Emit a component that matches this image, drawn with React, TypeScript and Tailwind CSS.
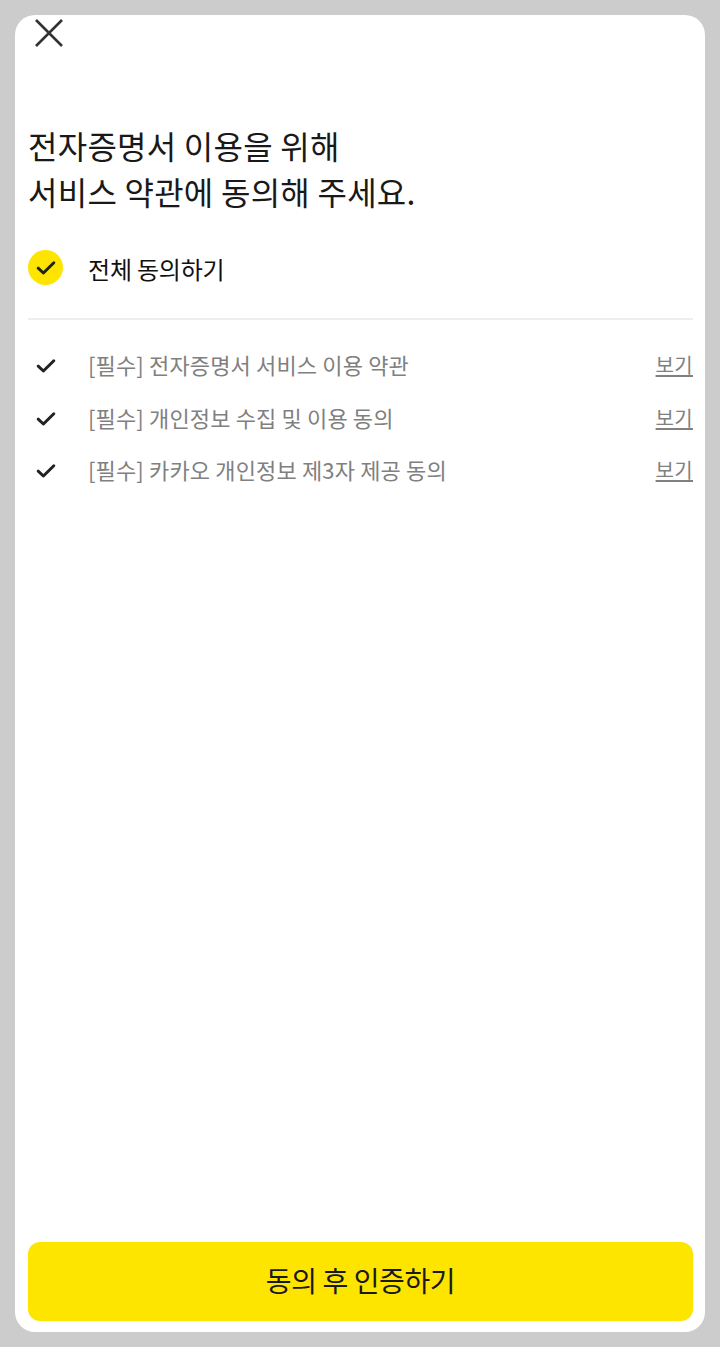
const fontStack = {
  fontFamily: '"Noto Sans CJK KR", "Noto Sans", sans-serif',
};

const terms = [
  "[필수] 전자증명서 서비스 이용 약관",
  "[필수] 개인정보 수집 및 이용 동의",
  "[필수] 카카오 개인정보 제3자 제공 동의",
];

function CheckMark({ className }: { className: string }) {
  return (
    <svg viewBox="0 0 20 16" fill="none" className={className}>
      <path
        d="M2.2 8.2 L7.4 13 L17.8 2.8"
        stroke="currentColor"
        strokeWidth="3"
        strokeLinecap="round"
        strokeLinejoin="round"
      />
    </svg>
  );
}

export default function App() {
  return (
    <div
      className="flex h-[1347px] w-[720px] bg-[#cccccc] px-[15px] pt-[15px] pb-[15px]"
      style={fontStack}
    >
      <div className="flex flex-1 flex-col rounded-[20px] bg-white pr-[12px] pb-[11px] pl-[13px]">
        <button type="button" className="ml-[7px] h-[36px] w-[28px] text-[#333333]">
          <svg viewBox="0 0 28 28" fill="none" className="h-[28px] w-[28px]">
            <path
              d="M1 1 L27 27 M27 1 L1 27"
              stroke="currentColor"
              strokeWidth="2.6"
            />
          </svg>
        </button>

        <h1 className="mt-[71px] text-[32px] leading-[46px] font-normal tracking-[0.25px] text-[#191919]">
          전자증명서 이용을 위해
          <br />
          서비스 약관에 동의해 주세요.
        </h1>

        <div className="mt-[35px] flex h-[36px] items-center">
          <span className="flex h-[35px] w-[35px] items-center justify-center rounded-full bg-[#fee500] text-[#222222]">
            <CheckMark className="mt-[1px] h-[16px] w-[20px]" />
          </span>
          <span className="mt-[4px] ml-[25px] text-[24px] leading-[36px] tracking-[-0.2px] text-[#111111]">
            전체 동의하기
          </span>
        </div>

        <div className="mt-[33px] h-[2px] bg-[#eeeeee]" />

        <ul className="mt-[26px] flex flex-col gap-[14.5px]">
          {terms.map((term) => (
            <li key={term} className="flex h-[38px] items-center">
              <CheckMark className="mt-[2px] ml-[8px] h-[16px] w-[20px] text-[#222222]" />
              <span className="ml-[32px] flex-1 pb-[2px] text-[22px] leading-[38px] tracking-[0.15px] text-[#808080]">
                {term}
              </span>
              <a className="text-[20px] leading-[38px] tracking-[0.3px] text-[#808080] underline underline-offset-2">
                보기
              </a>
            </li>
          ))}
        </ul>

        <button
          type="button"
          className="mt-auto h-[79px] rounded-[12px] bg-[#fee500] pb-[3px] text-[28px] tracking-[-0.4px] text-[#191919]"
        >
          동의 후 인증하기
        </button>
      </div>
    </div>
  );
}
